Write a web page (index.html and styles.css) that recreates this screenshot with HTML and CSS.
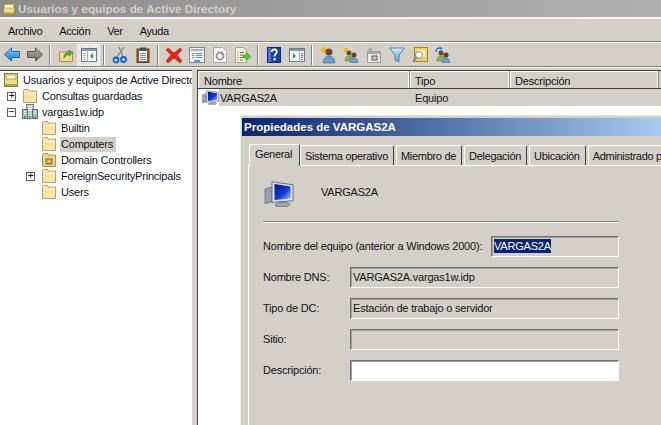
FILE: index.html
```html
<!DOCTYPE html>
<html lang="es">
<head>
  <meta charset="UTF-8">
  <meta name="viewport" content="width=device-width, initial-scale=1.0">
  <title>Usuarios y equipos de Active Directory</title>
  <link rel="stylesheet" href="styles.css">
</head>
<body>
  <!-- Shared icons -->
  <svg class="icon-defs" aria-hidden="true">
    <defs>
      <linearGradient id="blueArrow" x1="0" y1="0" x2="0" y2="1">
        <stop offset="0" stop-color="#8fd0f5"/><stop offset="1" stop-color="#1c78c8"/>
      </linearGradient>
      <linearGradient id="grayArrow" x1="0" y1="0" x2="0" y2="1">
        <stop offset="0" stop-color="#b0b0ac"/><stop offset="1" stop-color="#6c6c68"/>
      </linearGradient>
      <linearGradient id="screen" x1="0" y1="0" x2="1" y2="1">
        <stop offset="0" stop-color="#06107a"/><stop offset=".6" stop-color="#1440d8"/><stop offset="1" stop-color="#b0c8f8"/>
      </linearGradient>
      <linearGradient id="funnel" x1="0" y1="0" x2="0" y2="1">
        <stop offset="0" stop-color="#d8ecf8"/><stop offset="1" stop-color="#5a9cc8"/>
      </linearGradient>
    </defs>
    <symbol id="i-folder" viewBox="0 0 16 16">
      <path d="M1.500 14.500V3l1-1.500h4l1 1.500h7v11.500z" fill="#f8e4a8" stroke="#b8a060"/>
      <path d="M2.500 5.500h11" stroke="#fdf4d4" fill="none"/>
    </symbol>
    <symbol id="i-folder-dc" viewBox="0 0 16 16">
      <path d="M1.500 14.500V3l1-1.500h4l1 1.500h7v11.500z" fill="#ecd48c" stroke="#a89050"/>
      <rect x="5" y="7" width="6" height="5" fill="#c8b060" stroke="#807030"/>
      <rect x="7" y="9" width="2" height="1" fill="#f8f0b0"/>
    </symbol>
    <symbol id="i-root" viewBox="0 0 16 16">
      <rect x="1.500" y="1.500" width="13" height="13" fill="#f0dc90" stroke="#8c7c44"/>
      <rect x="3" y="3" width="10" height="4" fill="#fff8d0" stroke="#b8a860"/>
      <rect x="2" y="12" width="12" height="2" fill="#c0a040"/>
    </symbol>
    <symbol id="i-domain" viewBox="0 0 16 16">
      <rect x="4.500" y=".5" width="7" height="14" fill="#c4ccd0" stroke="#70808c"/>
      <rect x=".5" y="5.500" width="5" height="9" fill="#b0bcc4" stroke="#607078"/>
      <rect x="10.500" y="5.500" width="5" height="9" fill="#b0bcc4" stroke="#607078"/>
      <path d="M6 2.500h4M6 4.500h4M6 6.500h4M2 7.500h2M12 7.500h2M2 9.500h2M12 9.500h2" stroke="#eef2f4"/>
      <rect x="2" y="12" width="2" height="2" fill="#30c030"/>
      <rect x="7" y="12" width="2" height="2" fill="#30c030"/>
      <rect x="12" y="12" width="2" height="2" fill="#30c030"/>
    </symbol>
    <symbol id="i-computer" viewBox="0 0 30 26">
      <path d="M1 8l7-2v15l-7 1.500z" fill="#98a0ac" stroke="#687080" stroke-width=".8"/>
      <path d="M8 .8l21 3v16l-21 1.500z" fill="#dfe2ea" stroke="#687088"/>
      <path d="M10.500 3l16 2.500v12l-16 1.500z" fill="url(#screen)"/>
      <path d="M15 21.500h8l3 2-2 2h-12l-1-2z" fill="#a4a8b4" stroke="#707884" stroke-width=".8"/>
    </symbol>
    <symbol id="i-back" viewBox="0 0 16 14">
      <path d="M.5 7L7.500.5v3.500h8v6h-8v3.500z" fill="url(#blueArrow)" stroke="#1868b0"/>
    </symbol>
    <symbol id="i-forward" viewBox="0 0 16 14">
      <path d="M15.500 7L8.500.5v3.500h-8v6h8v3.500z" fill="url(#grayArrow)" stroke="#585854"/>
    </symbol>
    <symbol id="i-up" viewBox="0 0 16 16">
      <path d="M1.500 14.500V5h13v9.500z" fill="#f0d890" stroke="#a89050"/>
      <path d="M6 11c0-4 2-6 5-6V3l4 3-4 3V7.500c-2 0-3 1-5 3.500z" fill="#50b030" stroke="#30801c" stroke-width=".6"/>
    </symbol>
    <symbol id="i-tree-view" viewBox="0 0 16 16">
      <rect x=".5" y="1.500" width="15" height="13" fill="#f4f6fa" stroke="#707880"/>
      <rect x="1" y="2" width="14" height="2" fill="#8498b4"/>
      <path d="M6.500 4.500v10" stroke="#a0a8b0"/>
      <path d="M2.500 6.500h2M2.500 8.500h2M2.500 10.500h2M2.500 12.500h2" stroke="#80a0c8"/>
      <path d="M12 6v6l-3-3z" fill="#20a040"/>
    </symbol>
    <symbol id="i-action-view" viewBox="0 0 16 16">
      <rect x=".5" y="1.500" width="15" height="13" fill="#f4f6fa" stroke="#707880"/>
      <rect x="1" y="2" width="14" height="2" fill="#8498b4"/>
      <path d="M10.500 4.500v10" stroke="#a0a8b0"/>
      <path d="M12 6.500h2M12 8.500h2M12 10.500h2M12 12.500h2" stroke="#3070c8"/>
      <path d="M4 6v6l3-3z" fill="#20a040"/>
    </symbol>
    <symbol id="i-cut" viewBox="0 0 16 18">
      <path d="M5 11L12 1M11 11L7 1" stroke="#808890" stroke-width="1.300" fill="none"/>
      <circle cx="4" cy="14" r="2.500" fill="none" stroke="#1860c8" stroke-width="1.800"/>
      <circle cx="11.500" cy="13.500" r="2.500" fill="none" stroke="#1860c8" stroke-width="1.800"/>
    </symbol>
    <symbol id="i-paste" viewBox="0 0 14 16">
      <rect x="1" y="2" width="12" height="13.500" fill="#8c5a34" stroke="#6c4424"/>
      <rect x="3" y="4" width="8" height="10" fill="#e8f0f8"/>
      <path d="M4 6.500h6M4 8.500h6M4 10.500h6M4 12.500h6" stroke="#7090b8"/>
      <rect x="4" y="0.500" width="6" height="3" fill="#405060"/>
    </symbol>
    <symbol id="i-delete" viewBox="0 0 16 16">
      <path d="M2 1l6 5 6-5 2 2-5 5 5 6-2 2-6-5-6 5-2-2 5-6-5-5z" fill="#e02818" stroke="#b01c10" stroke-width=".5"/>
    </symbol>
    <symbol id="i-props" viewBox="0 0 16 16">
      <rect x=".5" y=".5" width="15" height="15" fill="#f0f2f4" stroke="#808890"/>
      <rect x="2" y="2" width="12" height="2" fill="#a8b4c0"/>
      <path d="M3 6.500h2M7 6.500h6M3 8.500h2M7 8.500h6M3 10.500h2M7 10.500h6" stroke="#7088a8"/>
      <rect x="5" y="13" width="6" height="2" fill="#30a8e0"/>
    </symbol>
    <symbol id="i-refresh" viewBox="0 0 14 16">
      <path d="M.5.5h9l4 4v11H.5z" fill="#f0f0ee" stroke="#a8a8a4"/>
      <circle cx="7" cy="9" r="3.500" fill="none" stroke="#989894" stroke-width="1.800"/>
      <path d="M9 4l2 3-3 1z" fill="#989894"/>
    </symbol>
    <symbol id="i-export" viewBox="0 0 16 16">
      <path d="M.5.5h8l3 3v12H.5z" fill="#f8f4d8" stroke="#a8a490"/>
      <path d="M2.500 5.500h1M5 5.500h4M2.500 8h1M5 8h3M2.500 10.500h1M5 10.500h3M2.500 13h1M5 13h3" stroke="#706c58"/>
      <path d="M8 8h3V5l5 4.500-5 4.500v-3H8z" fill="#48c838" stroke="#30981c" stroke-width=".5"/>
    </symbol>
    <symbol id="i-help" viewBox="0 0 14 16">
      <rect x=".5" y=".5" width="13" height="15" fill="#2040a8" stroke="#102878"/>
      <rect x="1" y="1" width="3" height="14" fill="#5070d0"/>
      <path d="M4.800 5c0-3.500 5-3.500 5 0 0 2-2.300 2-2.300 4.500" fill="none" stroke="#fff" stroke-width="1.800"/>
      <rect x="6.500" y="11" width="2" height="2.400" fill="#fff"/>
    </symbol>
    <symbol id="i-user-new" viewBox="0 0 16 18">
      <path d="M4 0l1 2 2-1-1 2 2 1-2 1 1 2-2-1-1 2-1-2-2 1 1-2-2-1 2-1-1-2 2 1z" fill="#f8b020"/>
      <circle cx="9" cy="6" r="3.500" fill="#6c4828"/>
      <path d="M3 17c0-5 3-7 6-7s6 2 6 7z" fill="#6c9cc8" stroke="#40709c" stroke-width=".6"/>
    </symbol>
    <symbol id="i-group-new" viewBox="0 0 16 16">
      <path d="M3 0l.8 1.500 1.500-.8-.8 1.500 1.500.8-1.500.8.800 1.500-1.500-.8L3 6l-.8-1.500-1.500.8.800-1.500L0 3l1.500-.8L.7.700l1.500.8z" fill="#f8b020"/>
      <circle cx="6" cy="6" r="2.500" fill="#6c4828"/>
      <path d="M2 14c0-4 2-5 4-5s4 1 4 5z" fill="#80b060" stroke="#508030" stroke-width=".5"/>
      <circle cx="11" cy="8" r="2.500" fill="#5c4030"/>
      <path d="M7 16c0-4 2-5 4-5s4 1 4 5z" fill="#6c9cc8" stroke="#40709c" stroke-width=".5"/>
    </symbol>
    <symbol id="i-group-move" viewBox="0 0 16 16">
      <path d="M1 5c0-3 2-4.500 5-4" fill="none" stroke="#2080d0" stroke-width="1.500"/>
      <path d="M5 0l3 1.200-3 1.800z" fill="#2080d0"/>
      <circle cx="6" cy="6" r="2.500" fill="#6c4828"/>
      <path d="M2 14c0-4 2-5 4-5s4 1 4 5z" fill="#80b060" stroke="#508030" stroke-width=".5"/>
      <circle cx="11" cy="8" r="2.500" fill="#5c4030"/>
      <path d="M7 16c0-4 2-5 4-5s4 1 4 5z" fill="#6c9cc8" stroke="#40709c" stroke-width=".5"/>
    </symbol>
    <symbol id="i-ou-new" viewBox="0 0 16 16">
      <path d="M4 0l.8 1.500 1.500-.8-.8 1.500 1.500.8-1.500.8.800 1.500-1.500-.8L4 6l-.8-1.500-1.500.8.800-1.500L1 3l1.500-.8-.8-1.500 1.500.8z" fill="#b0b0ac"/>
      <rect x="1.500" y="4.500" width="13" height="11" fill="#e8e8e4" stroke="#9c9c98"/>
      <rect x="2" y="5" width="12" height="2" fill="#a8a8a4"/>
      <rect x="6" y="9" width="5" height="4" fill="#c8c8c4" stroke="#606060"/>
    </symbol>
    <symbol id="i-filter" viewBox="0 0 16 16">
      <path d="M.5 1h15L10 8v7l-4-2V8z" fill="url(#funnel)" stroke="#4c88b0"/>
    </symbol>
    <symbol id="i-find" viewBox="0 0 16 16">
      <rect x="2.500" y=".5" width="13" height="14" fill="#e8d070" stroke="#a08828"/>
      <rect x="6" y="3" width="7" height="7" fill="#fff8c8"/>
      <circle cx="7" cy="8" r="3.500" fill="#f4f8f8" stroke="#808878"/>
      <path d="M4.500 10.500L.7 14.500" stroke="#787868" stroke-width="1.500"/>
    </symbol>
  </svg>

  <div class="mmc">
    <div class="titlebar">
      <svg class="title-icon"><use href="#i-root"/></svg>
      <span>Usuarios y equipos de Active Directory</span>
    </div>

    <div class="menubar">
      <span>Archivo</span>
      <span>Acción</span>
      <span>Ver</span>
      <span>Ayuda</span>
    </div>

    <div class="toolbar">
      <span class="tool"><svg class="ico-arrow"><use href="#i-back"/></svg></span>
      <span class="tool"><svg class="ico-arrow"><use href="#i-forward"/></svg></span>
      <span class="tool-sep"></span>
      <span class="tool"><svg class="ico"><use href="#i-up"/></svg></span>
      <span class="tool tool-on"><svg class="ico"><use href="#i-tree-view"/></svg></span>
      <span class="tool-sep"></span>
      <span class="tool"><svg class="ico-tall"><use href="#i-cut"/></svg></span>
      <span class="tool"><svg class="ico"><use href="#i-paste"/></svg></span>
      <span class="tool-sep"></span>
      <span class="tool"><svg class="ico"><use href="#i-delete"/></svg></span>
      <span class="tool"><svg class="ico"><use href="#i-props"/></svg></span>
      <span class="tool"><svg class="ico"><use href="#i-refresh"/></svg></span>
      <span class="tool"><svg class="ico"><use href="#i-export"/></svg></span>
      <span class="tool-sep"></span>
      <span class="tool"><svg class="ico"><use href="#i-help"/></svg></span>
      <span class="tool"><svg class="ico"><use href="#i-action-view"/></svg></span>
      <span class="tool-sep"></span>
      <span class="tool"><svg class="ico-tall"><use href="#i-user-new"/></svg></span>
      <span class="tool"><svg class="ico"><use href="#i-group-new"/></svg></span>
      <span class="tool"><svg class="ico"><use href="#i-ou-new"/></svg></span>
      <span class="tool"><svg class="ico"><use href="#i-filter"/></svg></span>
      <span class="tool"><svg class="ico"><use href="#i-find"/></svg></span>
      <span class="tool"><svg class="ico"><use href="#i-group-move"/></svg></span>
    </div>

    <div class="panes">
      <!-- Tree -->
      <div class="tree">
        <div class="tree-row tree-root">
          <svg class="ico"><use href="#i-root"/></svg>
          <span class="tree-label">Usuarios y equipos de Active Directory</span>
        </div>
        <div class="tree-row level-1">
          <span class="toggle">+</span>
          <svg class="ico"><use href="#i-folder"/></svg>
          <span class="tree-label">Consultas guardadas</span>
        </div>
        <div class="tree-row level-1">
          <span class="toggle">−</span>
          <svg class="ico"><use href="#i-domain"/></svg>
          <span class="tree-label">vargas1w.idp</span>
        </div>
        <div class="tree-row level-2">
          <span class="toggle toggle-none"></span>
          <svg class="ico"><use href="#i-folder"/></svg>
          <span class="tree-label">Builtin</span>
        </div>
        <div class="tree-row level-2">
          <span class="toggle toggle-none"></span>
          <svg class="ico"><use href="#i-folder"/></svg>
          <span class="tree-label tree-selected">Computers</span>
        </div>
        <div class="tree-row level-2">
          <span class="toggle toggle-none"></span>
          <svg class="ico"><use href="#i-folder-dc"/></svg>
          <span class="tree-label">Domain Controllers</span>
        </div>
        <div class="tree-row level-2">
          <span class="toggle">+</span>
          <svg class="ico"><use href="#i-folder"/></svg>
          <span class="tree-label">ForeignSecurityPrincipals</span>
        </div>
        <div class="tree-row level-2">
          <span class="toggle toggle-none"></span>
          <svg class="ico"><use href="#i-folder"/></svg>
          <span class="tree-label">Users</span>
        </div>
      </div>

      <!-- List -->
      <div class="list">
        <div class="list-head">
          <span class="col col-name">Nombre</span>
          <span class="col col-type">Tipo</span>
          <span class="col col-desc">Descripción</span>
        </div>
        <div class="list-row">
          <svg class="row-icon"><use href="#i-computer"/></svg>
          <div class="row-cells">
            <span class="cell-name">VARGAS2A</span>
            <span>Equipo</span>
          </div>
        </div>
      </div>
    </div>
  </div>

  <!-- Properties dialog -->
  <div class="dialog">
    <div class="dialog-title">Propiedades de VARGAS2A</div>
    <div class="tabs">
      <span class="tab tab-on">General</span>
      <span class="tab">Sistema operativo</span>
      <span class="tab">Miembro de</span>
      <span class="tab">Delegación</span>
      <span class="tab">Ubicación</span>
      <span class="tab">Administrado por</span>
    </div>
    <div class="page">
      <div class="page-head">
        <svg class="page-icon"><use href="#i-computer"/></svg>
        <span class="page-name">VARGAS2A</span>
      </div>
      <div class="rule"></div>
      <div class="field field-first">
        <span class="field-label">Nombre del equipo (anterior a Windows 2000):</span>
        <div class="input input-short"><span class="selected">VARGAS2A</span></div>
      </div>
      <div class="field">
        <span class="field-label">Nombre DNS:</span>
        <div class="input">VARGAS2A.vargas1w.idp</div>
      </div>
      <div class="field">
        <span class="field-label">Tipo de DC:</span>
        <div class="input">Estación de trabajo o servidor</div>
      </div>
      <div class="field">
        <span class="field-label">Sitio:</span>
        <div class="input"></div>
      </div>
      <div class="field">
        <span class="field-label">Descripción:</span>
        <div class="input input-white"></div>
      </div>
    </div>
  </div>
</body>
</html>
```

FILE: styles.css
```css
/* General */
html, body {
  margin: 0;
  padding: 0;
  height: 100%;
  overflow: hidden;
}

body {
  position: relative;
  background: #d4d0c8;
  color: #101018;
  font-family: "Liberation Sans", Arial, sans-serif;
  font-size: 11px;
  letter-spacing: -0.2px;
}

.icon-defs {
  position: absolute;
  width: 0;
  height: 0;
}

svg {
  display: block;
  flex: none;
}

.ico {
  width: 16px;
  height: 16px;
}

.ico-arrow {
  width: 16px;
  height: 15px;
}

.ico-tall {
  width: 16px;
  height: 18px;
}

/* Main window */
.mmc {
  display: flex;
  flex-direction: column;
  height: 425px;
}

.titlebar {
  display: flex;
  align-items: center;
  gap: 2px;
  height: 17px;
  padding-left: 2px;
  background: linear-gradient(90deg, #8c8c8c, #a0a0a0 50%, #b0b0b0);
  color: #d4d0c8;
  font-size: 11.75px;
  font-weight: bold;
  letter-spacing: 0;
  white-space: nowrap;
}

.title-icon {
  width: 14px;
  height: 14px;
}

.menubar {
  display: flex;
  gap: 17px;
  align-items: center;
  height: 21px;
  padding: 1px 0 0 8px;
  border-top: 2px solid #f4f4f0;
  border-bottom: 1px solid #808080;
  letter-spacing: -0.35px;
}

.toolbar {
  display: flex;
  align-items: center;
  height: 23px;
  border-top: 1px solid #fff;
  border-bottom: 1px solid #808080;
}

.tool {
  display: flex;
  align-items: center;
  justify-content: center;
  width: 23px;
  height: 22px;
  box-sizing: border-box;
}

.tool-on {
  border: 1px solid #f4f4f4;
  background: repeating-conic-gradient(#fff 0 25%, #d4d0c8 0 50%) 0 0 / 2px 2px;
}

.tool-sep {
  width: 2px;
  height: 20px;
  margin: 0 3px;
  background: linear-gradient(90deg, #808080 50%, #fff 50%);
}

/* Panes */
.panes {
  flex: 1;
  display: flex;
  border-top: 1px solid #fff;
  padding-top: 2px;
  min-height: 0;
}

.tree {
  width: 192px;
  box-sizing: border-box;
  padding-top: 1px;
  background: #fff;
  border-top: 1px solid #404040;
  overflow: hidden;
}

.tree-row {
  display: flex;
  align-items: center;
  height: 16px;
  white-space: nowrap;
}

.tree-root {
  padding-left: 3px;
}

.level-1 {
  padding-left: 7px;
}

.level-2 {
  padding-left: 26px;
}

.toggle {
  flex: none;
  width: 9px;
  height: 9px;
  box-sizing: border-box;
  margin-right: 6px;
  border: 1px solid #606060;
  color: #000;
  font-size: 10px;
  line-height: 6px;
  text-align: center;
}

.toggle-none {
  border: 0;
}

.tree-label {
  margin-left: 3px;
  padding: 1px 1px 2px;
}

.tree-selected {
  padding-right: 3px;
  background: #d4d0c8;
}

.list {
  flex: 1;
  margin-left: 5px;
  background: #fff;
  border-top: 1px solid #404040;
  border-left: 1px solid #404040;
  min-width: 0;
}

.list-head {
  display: flex;
  height: 17px;
  background: #d4d0c8;
  border-bottom: 1px solid #404040;
}

.col {
  box-sizing: border-box;
  padding-left: 5px;
  border-right: 1px solid #808080;
  box-shadow: inset -1px 0 0 #fff, inset 1px 1px 0 #fff;
  line-height: 20px;
}

.col-name {
  width: 212px;
  padding-left: 6px;
}

.col-type {
  width: 100px;
}

.col-desc {
  width: 149px;
}

.list-row {
  display: flex;
  align-items: center;
  height: 17px;
  padding-left: 4px;
}

.row-icon {
  width: 17px;
  height: 15px;
}

.row-cells {
  flex: 1;
  display: flex;
  height: 17px;
  line-height: 19px;
  background: #d4d0c8;
}

.cell-name {
  width: 195px;
  padding-left: 1px;
}

/* Dialog */
.dialog {
  position: absolute;
  left: 240px;
  top: 115px;
  width: 421px;
  height: 310px;
  box-sizing: border-box;
  padding: 2px 0 0 1px;
  overflow: hidden;
  background: #d4d0c8;
  border-top: 1px solid #e8e6e0;
  border-left: 1px solid #f0eee8;
}

.dialog-title {
  height: 18px;
  padding-left: 2px;
  background: linear-gradient(90deg, #0a246a, #a6caf0);
  color: #fff;
  font-size: 11.5px;
  font-weight: bold;
  letter-spacing: 0;
  line-height: 18px;
  white-space: nowrap;
}

.tabs {
  display: flex;
  align-items: flex-end;
  height: 21px;
  margin: 8px 0 0 7px;
  letter-spacing: -0.3px;
  white-space: nowrap;
}

.tab {
  flex: none;
  height: 19px;
  padding: 0 5px 0 4px;
  margin-right: 2px;
  line-height: 20px;
  border-top: 1px solid #fff;
  border-left: 1px solid #fff;
  border-right: 1px solid #404040;
  border-radius: 2px 2px 0 0;
}

.tab-on {
  position: relative;
  z-index: 1;
  height: 21px;
  width: 38px;
  padding: 0 6px 0 5px;
  margin-right: 0;
  margin-bottom: -1px;
  line-height: 19px;
  background: #d4d0c8;
}

.page {
  height: 260px;
  margin-left: 6px;
  padding: 15px 0 0 14px;
  border-top: 1px solid #fff;
  border-left: 1px solid #fff;
}

.page-head {
  display: flex;
  align-items: center;
  gap: 27px;
  height: 25px;
  padding-left: 1px;
}

.page-icon {
  width: 30px;
  height: 26px;
}

.page-name {
  padding-bottom: 3px;
}

.rule {
  width: 356px;
  height: 1px;
  margin-top: 15px;
  background: #808080;
  border-bottom: 1px solid #fff;
}

.field {
  display: flex;
  align-items: center;
  height: 21px;
  width: 356px;
  margin-top: 10px;
}

.field-first {
  margin-top: 13px;
}

.field-label {
  flex: none;
  width: 87px;
  padding-bottom: 2px;
  white-space: nowrap;
}

.field-first .field-label {
  width: 228px;
}

.input {
  flex: 1;
  height: 21px;
  box-sizing: border-box;
  padding-left: 2px;
  line-height: 18px;
  border: 1px solid;
  border-color: #707070 #fff #fff #707070;
  box-shadow: inset 1px 1px 0 #a0a0a0;
}

.input-white {
  background: #fff;
}

.selected {
  padding: 1px 0;
  background: #0a246a;
  color: #fff;
}
```
